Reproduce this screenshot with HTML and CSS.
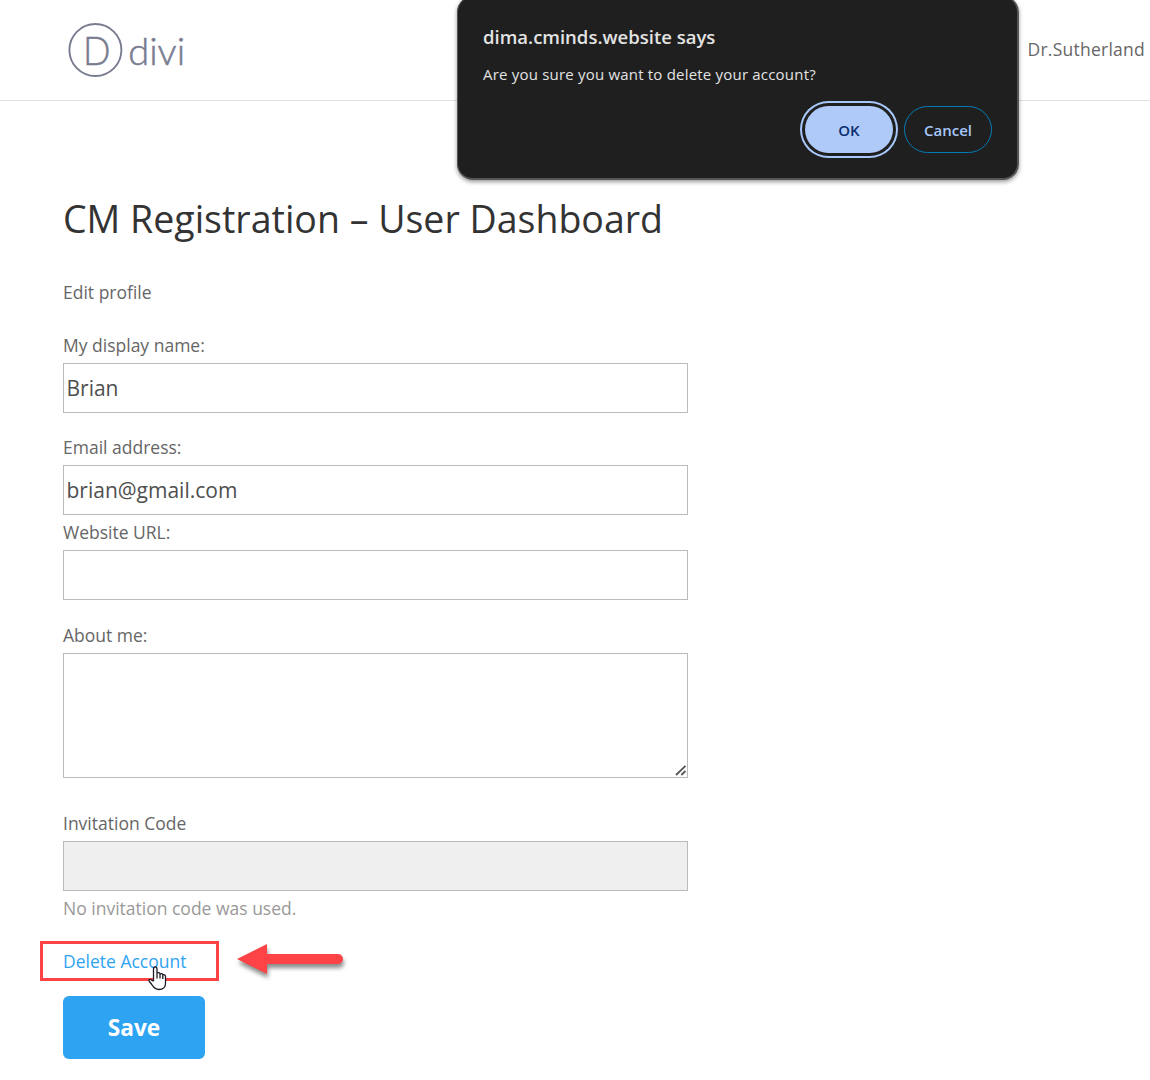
FILE: index.html
```html
<!DOCTYPE html>
<html lang="en">
<head>
<meta charset="utf-8">
<title>CM Registration – User Dashboard</title>
<link rel="stylesheet" href="styles.css">
</head>
<body>
<header class="site-header">
  <a class="logo" aria-label="divi">
    <svg width="124" height="60" viewBox="0 0 124 60">
      <circle cx="31.4" cy="30" r="26" fill="none" stroke="#797c90" stroke-width="1.9"/>
      <text class="logo-letter" x="19" y="44.5" textLength="27.5" lengthAdjust="spacingAndGlyphs">D</text>
      <text class="logo-word" x="64.200" y="44.5" textLength="57" lengthAdjust="spacingAndGlyphs">divi</text>
    </svg>
  </a>
  <span class="user-name">Dr.Sutherland</span>
</header>

<main class="dashboard">
  <h1 class="title">CM Registration – User Dashboard</h1>
  <p class="subtitle">Edit profile</p>
  <form class="profile-form">
    <div class="field">
      <label class="label" for="name">My display name:</label>
      <input class="control" id="name" type="text" value="Brian">
    </div>
    <div class="field field-email">
      <label class="label" for="email">Email address:</label>
      <input class="control" id="email" type="text" value="brian@gmail.com">
    </div>
    <div class="field field-url">
      <label class="label" for="url">Website URL:</label>
      <input class="control" id="url" type="text">
    </div>
    <div class="field field-about">
      <label class="label" for="about">About me:</label>
      <div class="textarea-wrap">
        <textarea class="control control-area" id="about"></textarea>
        <svg class="grip" width="12" height="12" viewBox="0 0 12 12" fill="none" stroke="#555" stroke-width="1.8"><path d="M1 10L10.500 .8M6.300 10L10.500 6"/></svg>
      </div>
    </div>
    <div class="field">
      <label class="label" for="code">Invitation Code</label>
      <input class="control control-disabled" id="code" type="text" disabled>
      <span class="note">No invitation code was used.</span>
    </div>
    <div class="delete-row">
      <a class="delete-link">Delete Account</a>
      <span class="highlight"></span>
      <svg class="arrow" width="124" height="48" viewBox="0 0 124 48"><path d="M8 19L38 4V14H109A5 5 0 0 1 109 24H38V34Z" fill="#fd4345"/></svg>
      <svg class="cursor" width="21" height="28" viewBox="0 0 21 28"><path d="M6.500 16.200V4.200C6.500 1.200 10 1.200 10 4.200V8.200C10.800 7.200 13 7.500 13 9.200C13.900 8.200 15.600 8.500 15.800 9.900C17 9.200 18.500 9.800 18.500 11.500V18.500C18.500 22 16 24.500 11.800 24.500C7.500 24.500 6.500 22 4.800 19.500L2.400 16.500C1.200 14.900 2.600 13.900 4 14.700L6.500 16.200M10 8.200V13.500M13 9.200V13.500M15.800 9.900V14" fill="#fff" stroke="#1c1c28" stroke-width="1.300" stroke-linejoin="round"/></svg>
    </div>
    <button class="save" type="button">Save</button>
  </form>
</main>

<div class="dialog" role="dialog">
  <div class="dialog-title"><span>dima.cminds.website says</span></div>
  <div class="dialog-message">Are you sure you want to delete your account?</div>
  <div class="dialog-actions">
    <button class="dialog-btn btn-ok" type="button">OK</button>
    <button class="dialog-btn btn-cancel" type="button">Cancel</button>
  </div>
</div>
</body>
</html>
```
FILE: styles.css
```css
* { box-sizing: border-box; }

body {
  margin: 0;
  min-height: 1080px;
  overflow: hidden;
  background: #fff;
  color: #666;
  font: 17.5px/30px "Open Sans", sans-serif;
}

.site-header {
  display: flex;
  align-items: center;
  justify-content: space-between;
  height: 101px;
  padding: 0 5px 0 64px;
  border-bottom: 1px solid #e2e2e2;
}

.logo { display: flex; }
.logo text {
  fill: #797c90;
  stroke: #797c90;
  stroke-width: .5px;
  font-family: Lato, sans-serif;
  font-weight: 300;
}
.logo-letter { font-size: 40px; }
.logo-word { font-size: 36.5px; }

.user-name {
  padding-bottom: 2px;
  color: #666;
  font-size: 17.5px;
  font-weight: 500;
  letter-spacing: .25px;
}

.dashboard { width: 688px; padding: 91px 0 0 63px; }

.title {
  margin: 0;
  color: #333;
  font-size: 37.5px;
  font-weight: 400;
  line-height: 54px;
  white-space: nowrap;
}

.subtitle { margin: 31px 0 21px; }

.profile-form { display: flex; flex-direction: column; }
.field { display: flex; flex-direction: column; }
.field-email { margin-top: 17px; }
.field-about { margin: 18px 0 28px; }
.label { height: 35px; line-height: 35px; }

.control {
  display: block;
  width: 625px;
  height: 50px;
  margin: 0;
  padding: 2px 3px 2px 2.5px;
  border: 1px solid #bbb;
  border-radius: 0;
  background: #fff;
  color: #4e4e4e;
  font: 21px "Open Sans", sans-serif;
}

.textarea-wrap { position: relative; }
.control-area { height: 125px; resize: none; }
.grip { position: absolute; right: 1px; bottom: 1px; }
.control-disabled { background: #efefef; }
.note { height: 35px; line-height: 35px; color: #999; }

.delete-row { position: relative; height: 40px; margin-top: 15px; line-height: 40px; }
.delete-link { color: #2ea3f2; }
.highlight {
  position: absolute;
  left: -23px;
  top: 0;
  width: 179px;
  height: 40px;
  border: 3px solid #fd4345;
}
.arrow {
  position: absolute;
  left: 166px;
  top: -1px;
  overflow: visible;
  filter: drop-shadow(1px 4px 2px rgba(0, 0, 0, .45));
}
.cursor { position: absolute; left: 84px; top: 24px; }

.save {
  width: 142px;
  height: 63px;
  margin-top: 15px;
  padding: 0;
  border: 0;
  border-radius: 6px;
  background: #2ea3f2;
  color: #fff;
  font: 700 22.7px/63px "Open Sans", sans-serif;
}

.dialog {
  position: absolute;
  left: 457px;
  top: -4px;
  width: 562px;
  height: 184px;
  padding: 25px 25px 0;
  border: 1px solid #555;
  border-width: 1px 2px 2px 1px;
  border-radius: 16px;
  background: #1f1f1f;
  color: #e3e3e3;
  box-shadow: 0 2px 4px rgba(0, 0, 0, .4);
  font-family: "Open Sans", sans-serif;
  white-space: nowrap;
}
.dialog-title { font-size: 18.500px; font-weight: 600; line-height: 30px; }
.dialog-message { margin-top: 9px; font-size: 15px; letter-spacing: .2px; line-height: 26px; }
.dialog-actions { display: flex; justify-content: flex-end; gap: 11px; margin-top: 19px; }
.dialog-btn {
  width: 88px;
  height: 47px;
  padding: 0;
  border-radius: 24px;
  font: 600 15px "Open Sans", sans-serif;
}
.btn-ok {
  border: 0;
  background: #afcaf8;
  color: #0a2e70;
  box-shadow: 0 0 0 3px #1f1f1f, 0 0 0 5px #a8c7fa;
}
.btn-cancel { border: 1px solid #047db7; background: transparent; color: #a8c7fa; }
```
